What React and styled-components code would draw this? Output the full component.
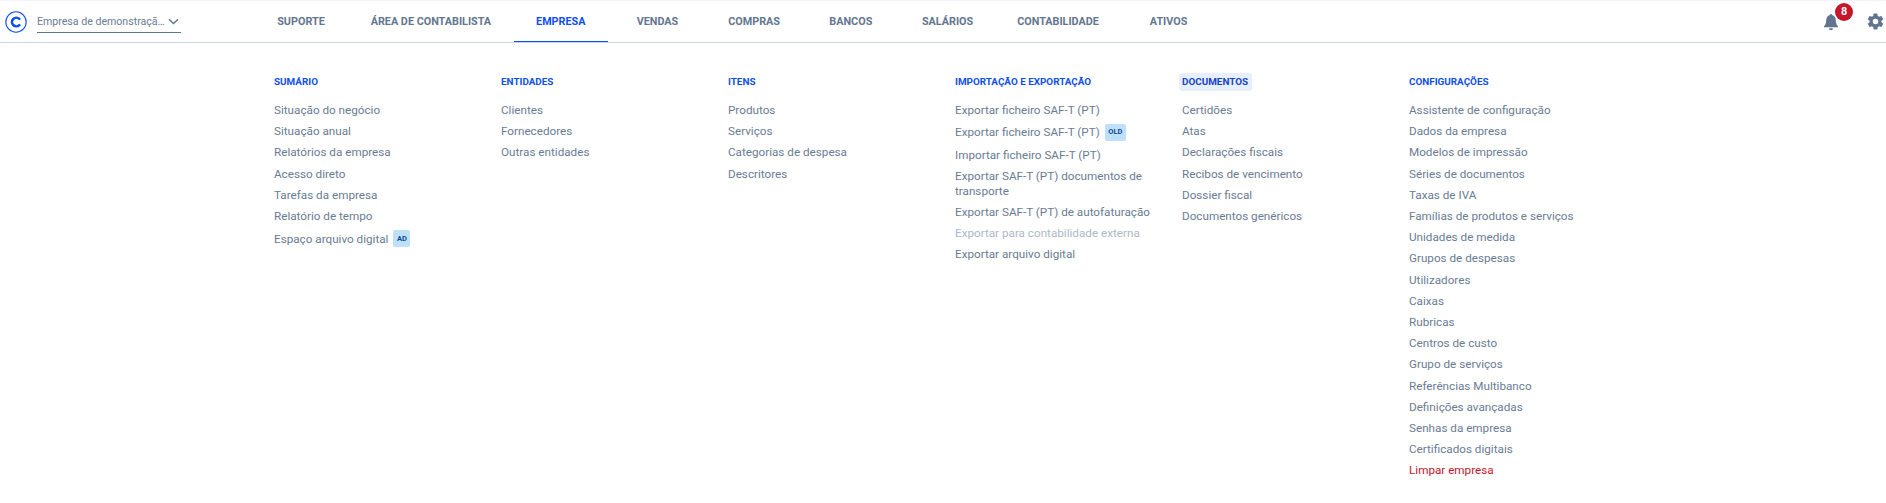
import React from "react";
import styled, { createGlobalStyle } from "styled-components";

const GlobalStyle = createGlobalStyle`
  html, body {
    margin: 0;
    padding: 0;
    background: #fff;
    font-family: Roboto, "Noto Sans", sans-serif;
    overflow: hidden;
  }
`;

const Page = styled.div`
  width: 1886px;
  height: 503px;
  overflow: hidden;
  border-top: 1px solid #f0f4fa;
  box-sizing: border-box;
`;

const Header = styled.header`
  height: 41px;
  display: flex;
  align-items: stretch;
  border-bottom: 1px solid #c9d4e0;
`;

const Brand = styled.div`
  width: 254px;
  padding-left: 4.5px;
  display: flex;
  align-items: center;
  gap: 10.5px;
  box-sizing: border-box;
  flex-shrink: 0;
`;

const CompanySelect = styled.div`
  width: 144px;
  height: 23px;
  display: flex;
  align-items: center;
  justify-content: space-between;
  padding-right: 2px;
  box-sizing: border-box;
  border-bottom: 1px solid #62758e;
  font-size: 10.6px;
  white-space: nowrap;
  color: #6a7c94;
`;

const Nav = styled.nav`
  display: flex;
  flex: 1;
  gap: 2.7px;
`;

const NavItem = styled.a`
  display: flex;
  align-items: center;
  justify-content: center;
  min-width: 94px;
  padding: 0 20px;
  box-sizing: border-box;
  font-size: 10.8px;
  font-weight: 700;
  color: ${(p) => (p.$active ? "#0f4fef" : "#64768f")};
  box-shadow: ${(p) => (p.$active ? "inset 0 -1px 0 #0f4fef" : "none")};
`;

const Actions = styled.div`
  display: flex;
  align-items: center;
  gap: 26px;
  padding-right: 1.5px;
`;

const Bell = styled.div`
  position: relative;
  width: 18px;
  height: 18px;
`;

const Badge = styled.span`
  position: absolute;
  top: -10px;
  left: 13.5px;
  width: 18px;
  height: 18px;
  border-radius: 50%;
  background: #c5162b;
  color: #fff;
  font-size: 10.8px;
  font-weight: 700;
  display: flex;
  align-items: center;
  justify-content: center;
`;

const Menu = styled.main`
  display: grid;
  grid-template-columns: repeat(6, 227px);
  padding: 30px 0 0 274px;
`;

const Column = styled.section`
  display: flex;
  flex-direction: column;
  align-items: flex-start;
  padding-right: 20px;
`;

const Heading = styled.h3`
  margin: 0 0 8.4px;
  height: 18px;
  line-height: 18px;
  font-size: 9.9px;
  font-weight: 700;
  text-transform: uppercase;
  color: #0f4fef;
  border-radius: 3px;
  ${(p) => p.$highlight && "background: #e7eefc; padding: 0 3.5px; margin-left: -3.5px; color: #1645c4;"}
`;

const Item = styled.a`
  font-size: 11.7px;
  line-height: 14.2px;
  padding: 3.5px 0;
  display: flex;
  align-items: center;
  gap: 5px;
  color: ${(p) => (p.$danger ? "#c5162b" : p.$disabled ? "#aeb8c6" : "#6a7c94")};
`;

const Tag = styled.span`
  height: 17px;
  padding: 0 3.5px;
  border-radius: 2px;
  background: #bfe0fb;
  color: #0d4a94;
  font-size: 7.5px;
  font-weight: 700;
  display: flex;
  align-items: center;
  justify-content: center;
`;

const NAV = ["Suporte", "Área de contabilista", "Empresa", "Vendas", "Compras", "Bancos", "Salários", "Contabilidade", "Ativos"];

const COLUMNS = [
  {
    title: "Sumário",
    items: [
      { label: "Situação do negócio" },
      { label: "Situação anual" },
      { label: "Relatórios da empresa" },
      { label: "Acesso direto" },
      { label: "Tarefas da empresa" },
      { label: "Relatório de tempo" },
      { label: "Espaço arquivo digital", tag: "AD" },
    ],
  },
  { title: "Entidades", items: [{ label: "Clientes" }, { label: "Fornecedores" }, { label: "Outras entidades" }] },
  {
    title: "Itens",
    items: [{ label: "Produtos" }, { label: "Serviços" }, { label: "Categorias de despesa" }, { label: "Descritores" }],
  },
  {
    title: "Importação e exportação",
    items: [
      { label: "Exportar ficheiro SAF-T (PT)" },
      { label: "Exportar ficheiro SAF-T (PT)", tag: "OLD" },
      { label: "Importar ficheiro SAF-T (PT)" },
      { label: "Exportar SAF-T (PT) documentos de transporte" },
      { label: "Exportar SAF-T (PT) de autofaturação" },
      { label: "Exportar para contabilidade externa", disabled: true },
      { label: "Exportar arquivo digital" },
    ],
  },
  {
    title: "Documentos",
    highlight: true,
    items: [
      { label: "Certidões" },
      { label: "Atas" },
      { label: "Declarações fiscais" },
      { label: "Recibos de vencimento" },
      { label: "Dossier fiscal" },
      { label: "Documentos genéricos" },
    ],
  },
  {
    title: "Configurações",
    items: [
      { label: "Assistente de configuração" },
      { label: "Dados da empresa" },
      { label: "Modelos de impressão" },
      { label: "Séries de documentos" },
      { label: "Taxas de IVA" },
      { label: "Famílias de produtos e serviços" },
      { label: "Unidades de medida" },
      { label: "Grupos de despesas" },
      { label: "Utilizadores" },
      { label: "Caixas" },
      { label: "Rubricas" },
      { label: "Centros de custo" },
      { label: "Grupo de serviços" },
      { label: "Referências Multibanco" },
      { label: "Definições avançadas" },
      { label: "Senhas da empresa" },
      { label: "Certificados digitais" },
      { label: "Limpar empresa", danger: true },
    ],
  },
];

function Logo() {
  return (
    <svg width="22" height="22" viewBox="0 0 22 22" style={{ flexShrink: 0 }}>
      <circle cx="11" cy="11" r="10.2" fill="none" stroke="#0f4fef" strokeWidth="1.1" />
      <path d="M14.3 7.9a4.300 4.300 0 1 0 0 6.200" fill="none" stroke="#0f4fef" strokeWidth="2.6" strokeLinecap="round" />
    </svg>
  );
}

function Chevron() {
  return (
    <svg width="11" height="7" viewBox="0 0 11 7" style={{ flexShrink: 0 }}>
      <path d="M1 1.200 5.500 5.500 10 1.200" fill="none" stroke="#62758e" strokeWidth="1.4" />
    </svg>
  );
}

function BellIcon() {
  return (
    <svg width="18" height="18" viewBox="0 0 18 18">
      <path d="M9 1c-.7 0-1.1.5-1.1 1.1C5.300 2.700 4.200 4.800 4.200 7.300c0 3-.9 4.800-2.200 6v.9h14v-.9c-1.300-1.200-2.200-3-2.200-6 0-2.500-1.100-4.600-3.700-5.200C10.100 1.500 9.700 1 9 1z" fill="#62758e" />
      <path d="M7 15.200h4a2 2 0 0 1-4 0z" fill="#62758e" />
    </svg>
  );
}

function GearIcon() {
  return (
    <svg width="19" height="19" viewBox="0 0 24 24">
      <path
        fill="#62758e"
        d="M19.430 12.980c.04-.32.07-.64.07-.98s-.03-.66-.07-.98l2.110-1.650c.19-.15.24-.42.120-.64l-2-3.460c-.12-.22-.39-.3-.61-.22l-2.490 1c-.52-.4-1.080-.73-1.690-.98l-.38-2.650A.49.49 0 0 0 14 2h-4c-.25 0-.46.18-.49.420l-.38 2.650c-.61.250-1.170.59-1.690.98l-2.490-1a.5.5 0 0 0-.61.220l-2 3.460c-.13.220-.07.490.120.640l2.110 1.650c-.04.320-.07.650-.07.980s.03.660.07.980l-2.110 1.650c-.19.150-.24.420-.12.640l2 3.460c.12.220.39.300.61.220l2.490-1c.52.400 1.080.730 1.690.980l.38 2.650c.03.240.24.420.49.420h4c.25 0 .46-.18.49-.42l.38-2.650c.61-.25 1.170-.59 1.690-.98l2.490 1c.23.090.49 0 .61-.22l2-3.460c.12-.22.07-.49-.12-.64l-2.110-1.650zM12 15.500a3.500 3.500 0 1 1 0-7 3.500 3.500 0 0 1 0 7z"
      />
    </svg>
  );
}

export default function App() {
  return (
    <Page>
      <GlobalStyle />
      <Header>
        <Brand>
          <Logo />
          <CompanySelect>
            <span>Empresa de demonstraçã…</span>
            <Chevron />
          </CompanySelect>
        </Brand>
        <Nav>
          {NAV.map((n) => (
            <NavItem key={n} $active={n === "Empresa"}>
              {n.toUpperCase()}
            </NavItem>
          ))}
        </Nav>
        <Actions>
          <Bell>
            <BellIcon />
            <Badge>8</Badge>
          </Bell>
          <GearIcon />
        </Actions>
      </Header>
      <Menu>
        {COLUMNS.map((col) => (
          <Column key={col.title}>
            <Heading $highlight={col.highlight}>{col.title}</Heading>
            {col.items.map((it, i) => (
              <Item key={i} $danger={it.danger} $disabled={it.disabled}>
                <span>{it.label}</span>
                {it.tag && <Tag>{it.tag}</Tag>}
              </Item>
            ))}
          </Column>
        ))}
      </Menu>
    </Page>
  );
}
